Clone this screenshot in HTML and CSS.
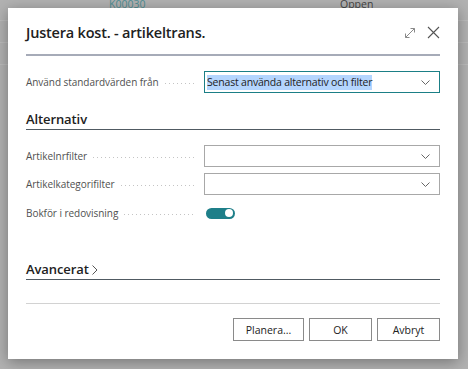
FILE: index.html
```html
<!DOCTYPE html>
<html lang="sv">
<head>
  <meta charset="UTF-8" />
  <title>Justera kost. - artikeltrans.</title>
  <meta name="viewport" content="width=device-width, initial-scale=1.0"/>
  <link rel="stylesheet" href="styles.css">
</head>
<body>
  <div class="page">
    <div class="page-row page-row-first">
      <span class="page-no">K00030</span>
      <span class="page-status">Öppen</span>
    </div>
    <div class="page-row"></div>
    <div class="page-row"></div>
  </div>

  <div class="dialog">
    <div class="dialog-header">
      <h1>Justera kost. - artikeltrans.</h1>
      <div class="header-icons">
        <svg width="12" height="12" viewBox="0 0 12 12" class="icon">
          <path d="M1.5 10.5 L10.5 1.5 M6.5 1.5 H10.5 V5.5 M1.5 6.5 V10.5 H5.5" fill="none" stroke="#8a8a8a" stroke-width="1"/>
        </svg>
        <svg width="13" height="13" viewBox="0 0 13 13" class="icon">
          <path d="M1 1 L12 12 M12 1 L1 12" fill="none" stroke="#555" stroke-width="1.1"/>
        </svg>
      </div>
    </div>
    <div class="header-line"></div>

    <div class="dialog-body">
      <div class="field first-field">
        <label class="field-label"><span>Använd standardvärden från</span><i class="leader"></i></label>
        <div class="select select-active">
          <span class="selected-text">Senast använda alternativ och filter</span>
          <svg width="9" height="5" viewBox="0 0 9 5" class="chevron"><path d="M0.5 0.5 L4.5 4.5 L8.5 0.5" fill="none" stroke="#666" stroke-width="1"/></svg>
        </div>
      </div>

      <h2 class="group-title">Alternativ</h2>

      <div class="field field-after-title">
        <label class="field-label"><span>Artikelnrfilter</span><i class="leader"></i></label>
        <div class="select">
          <span></span>
          <svg width="9" height="5" viewBox="0 0 9 5" class="chevron"><path d="M0.5 0.5 L4.5 4.5 L8.5 0.5" fill="none" stroke="#666" stroke-width="1"/></svg>
        </div>
      </div>

      <div class="field">
        <label class="field-label"><span>Artikelkategorifilter</span><i class="leader"></i></label>
        <div class="select">
          <span></span>
          <svg width="9" height="5" viewBox="0 0 9 5" class="chevron"><path d="M0.5 0.5 L4.5 4.5 L8.5 0.5" fill="none" stroke="#666" stroke-width="1"/></svg>
        </div>
      </div>

      <div class="field field-toggle">
        <label class="field-label"><span>Bokför i redovisning</span><i class="leader"></i></label>
        <div class="toggle"><span class="knob"></span></div>
      </div>

      <h2 class="group-title group-advanced">Avancerat
        <svg width="6" height="10" viewBox="0 0 6 10" class="chevron-right"><path d="M0.5 0.5 L5 5 L0.5 9.5" fill="none" stroke="#555" stroke-width="1"/></svg>
      </h2>

      <div class="footer-line"></div>

      <div class="buttons">
        <button class="btn btn-plan">Planera...</button>
        <button class="btn">OK</button>
        <button class="btn">Avbryt</button>
      </div>
    </div>
  </div>
</body>
</html>
```

FILE: styles.css
```css
body {
  margin: 0;
  font-family: "Open Sans", "Noto Sans", sans-serif;
  background: #b2b2b2;
  width: 468px;
  height: 369px;
  overflow: hidden;
  position: relative;
}

.page-row {
  height: 21px;
  border-bottom: 1px solid #bcbcbc;
  position: relative;
  font-size: 10.5px;
}

.page-row-first {
  height: 20px;
}

.page-no {
  position: absolute;
  left: 109px;
  top: -3px;
  color: #4f8e93;
}

.page-status {
  position: absolute;
  left: 340px;
  top: -3px;
  color: #444;
}

.dialog {
  position: absolute;
  left: 8px;
  top: 8px;
  width: 450px;
  height: 351px;
  background: #fff;
  box-shadow: 0 3px 14px rgba(0, 0, 0, 0.35);
}

.dialog-header {
  display: flex;
  align-items: center;
  justify-content: space-between;
  height: 46px;
  padding: 0 18px;
}

.dialog-header h1 {
  margin: 0;
  padding-top: 3px;
  font-size: 14.5px;
  font-weight: 600;
  letter-spacing: -0.2px;
  color: #212121;
}

.header-icons {
  display: flex;
  align-items: center;
  gap: 11px;
  padding-top: 3px;
}

.icon {
  display: block;
}

.header-line {
  margin: 0 18px;
  height: 2px;
  background: #a6abb8;
}

.dialog-body {
  padding: 0 18px;
}

.field {
  display: flex;
  align-items: center;
  height: 22px;
  margin-top: 6px;
}

.first-field {
  margin-top: 15px;
}

.field-after-title {
  margin-top: 15px;
}

.field-toggle {
  margin-top: 7px;
}

.field-label {
  width: 170px;
  margin-right: 8px;
  display: flex;
  align-items: center;
  font-size: 10px;
  letter-spacing: -0.05px;
  color: #505050;
  white-space: nowrap;
}

.leader {
  flex: 1;
  height: 1px;
  margin-left: 6px;
  margin-top: 2px;
  background: linear-gradient(to right, #c4c4c4 1px, transparent 1px) repeat-x;
  background-size: 4px 1px;
}

.select {
  flex: 1;
  height: 22px;
  box-sizing: border-box;
  border: 1px solid #a8a8a8;
  display: flex;
  align-items: center;
  justify-content: space-between;
  padding: 0 9px 0 2px;
}

.select-active {
  border: 1px solid #1b7f86;
}

.selected-text {
  font-size: 10.5px;
  letter-spacing: -0.2px;
  color: #222;
  background: #b4d5fe;
  line-height: 15px;
}

.chevron {
  display: block;
}

.toggle {
  width: 29px;
  height: 11px;
  border-radius: 6px;
  background: #1e7f89;
  margin-left: 2px;
  position: relative;
}

.knob {
  position: absolute;
  right: 2px;
  top: 1.5px;
  width: 8px;
  height: 8px;
  border-radius: 50%;
  background: #fff;
}

.group-title {
  margin: 16px 0 0;
  font-size: 13px;
  font-weight: 600;
  letter-spacing: -0.1px;
  line-height: 20px;
  color: #212121;
  border-bottom: 1px solid #505a62;
}

.group-advanced {
  margin-top: 35px;
  display: flex;
  align-items: center;
}

.chevron-right {
  margin-left: 3px;
  margin-top: 1px;
}

.footer-line {
  margin-top: 23px;
  height: 1px;
  background: #d2d2d2;
}

.buttons {
  display: flex;
  justify-content: flex-end;
  gap: 5px;
  margin-top: 14px;
}

.btn {
  height: 23px;
  width: 63px;
  background: #fff;
  border: 1px solid #8a8a8a;
  border-radius: 0;
  font-family: "Open Sans", "Noto Sans", sans-serif;
  font-size: 10.5px;
  color: #222;
  padding: 0;
}

.btn-plan {
  width: 71px;
}
```
